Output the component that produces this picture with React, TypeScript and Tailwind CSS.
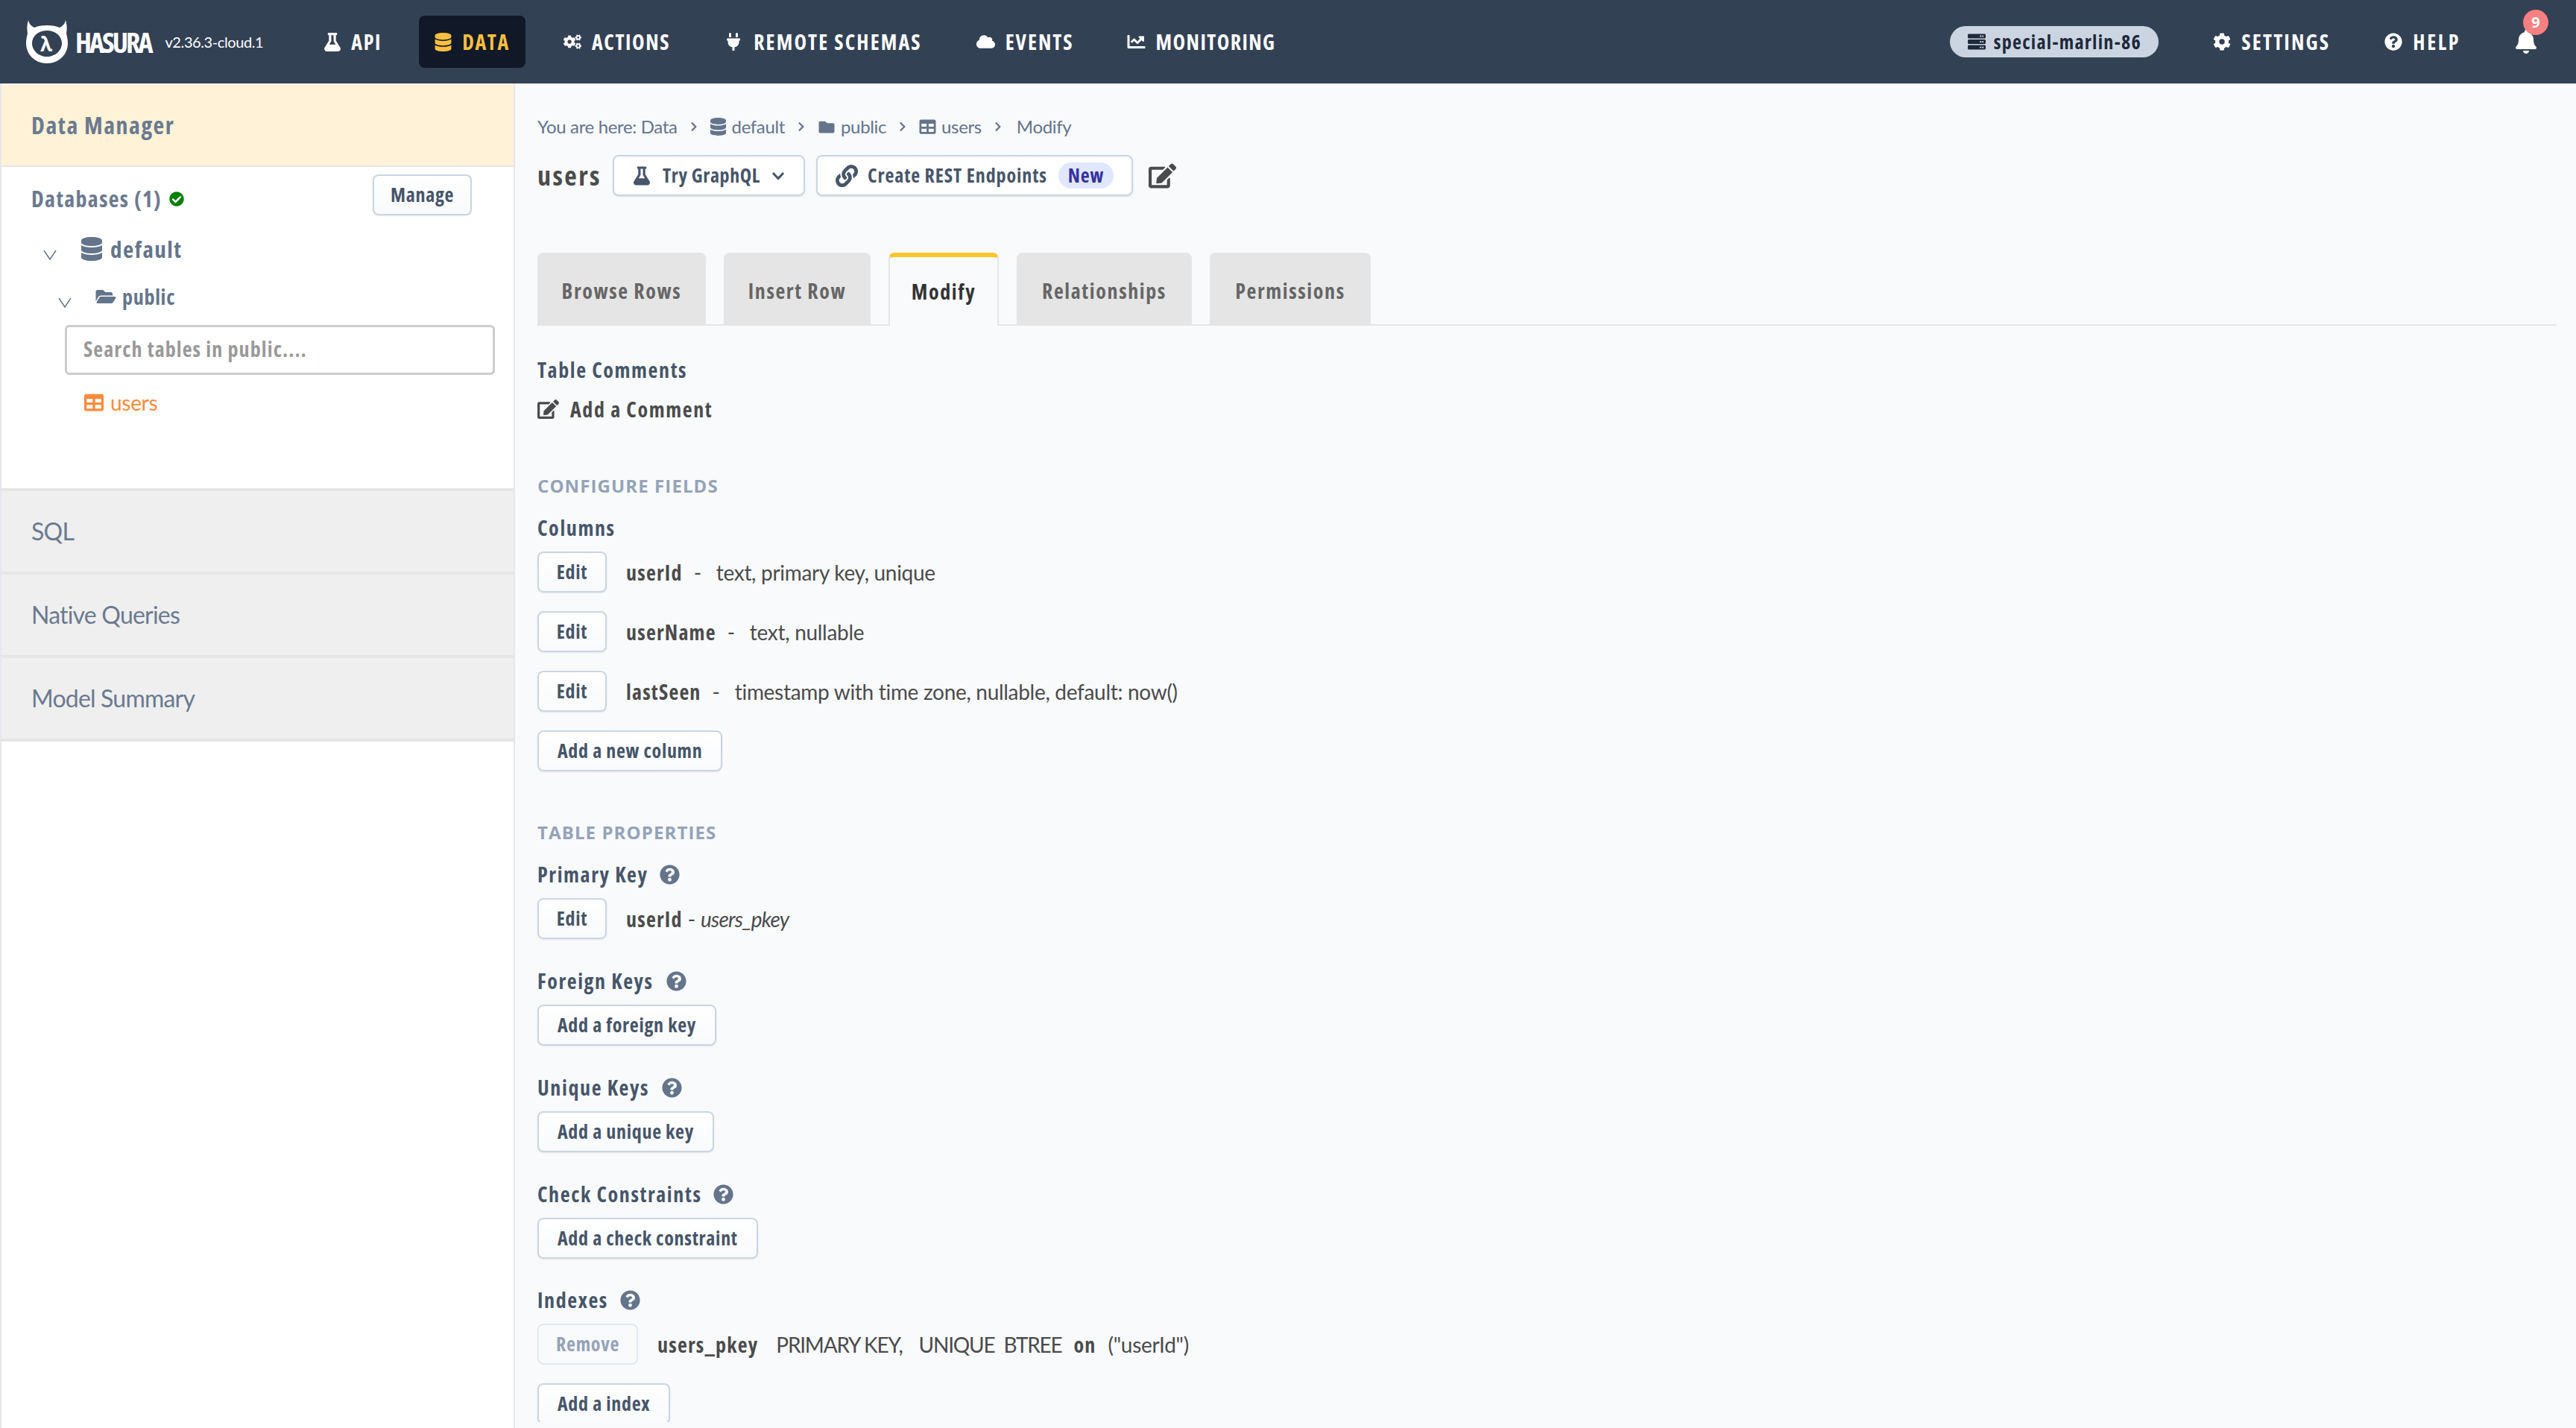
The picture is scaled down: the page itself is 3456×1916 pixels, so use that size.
import { FaFlask, FaDatabase, FaCogs, FaPlug, FaCloud, FaChartLine, FaServer, FaCog, FaQuestionCircle, FaBell, FaFolderOpen, FaFolder, FaTable, FaCheckCircle, FaLink, FaEdit, FaChevronRight } from "react-icons/fa";
import type { ReactNode } from "react";

const B = "font-['Open_Sans',sans-serif] font-bold font-stretch-[75%]";

function Logo() {
  return (
    <svg width="56" height="58" viewBox="0 0 56 58" className="shrink-0">
      <path fillRule="evenodd" fill="#fff" d="M3 0 C4 5 7 8 11 10 C15 8 21 7 28 7 C35 7 41 8 45 10 C49 8 52 5 53 0 C55 6 55 12 54 18 C55 22 56 26 56 31 C56 46 44 58 28 58 C12 58 0 46 0 31 C0 26 1 22 2 18 C1 12 1 6 3 0 Z M28 14 C17 14 8 21 8 31 C8 41 17 49 28 49 C39 49 48 41 48 31 C48 21 39 14 28 14 Z" />
    </svg>
  );
}

function Nav({ icon, label, cls = "", tr = "tracking-[1.6px]", gap = "gap-[14px]" }: { icon: ReactNode; label: string; cls?: string; tr?: string; gap?: string }) {
  return (
    <div className={`flex items-center text-[28px] text-white ${gap} ${tr} ${B} ${cls}`}>
      {icon}
      <span>{label}</span>
    </div>
  );
}

function Btn({ children, cls = "" }: { children: ReactNode; cls?: string }) {
  return (
    <button className={`h-[55px] rounded-[8px] border-2 border-[#cbd5e1] bg-linear-to-b from-white to-[#f8fafc] px-[25px] text-[26px] tracking-[0.7px] text-[#475569] shadow-[0_1px_2px_rgba(0,0,0,0.08)] ${B} ${cls}`}>
      {children}
    </button>
  );
}

function Help() {
  return <FaQuestionCircle className="h-[27px] w-[27px] text-[#64748b]" />;
}

function Heading({ children, help, cls = "" }: { children: ReactNode; help?: number; cls?: string }) {
  return (
    <div className={`flex h-[38px] items-center text-[28px] tracking-[1.6px] text-[#475569] ${B} ${cls}`}>
      <span>{children}</span>
      {help !== undefined && <span className="flex" style={{ marginLeft: help }}><Help /></span>}
    </div>
  );
}

function Section({ children, cls = "" }: { children: ReactNode; cls?: string }) {
  return <div className={`flex h-[30px] items-center font-['Open_Sans',sans-serif] text-[24px] font-bold tracking-[1.1px] text-[#94a3b8] ${cls}`}>{children}</div>;
}

function ColumnRow({ name, desc }: { name: string; desc: string }) {
  return (
    <div className="mb-[25px] flex items-center text-[28px] tracking-[-0.3px] text-[#4b4b4b]">
      <Btn cls="w-[93px] !px-0">Edit</Btn>
      <span className={`ml-[26px] tracking-[1.2px] ${B}`}>{name}</span>
      <span className="ml-[15px] mr-[20px]">-</span>
      <span>{desc}</span>
    </div>
  );
}

function Crumb() {
  return <FaChevronRight className="mx-[17px] h-[14px] w-[10px] text-[#64748b]" />;
}

function Tab({ label, active, w }: { label: string; active?: boolean; w: string }) {
  return active ? (
    <div className={`${w} relative z-10 -mb-[2px] flex h-[98px] items-center justify-center rounded-t-[8px] border-x-2 border-t-[6px] border-x-[#e5e5e5] border-t-[#fdc52b] bg-[#f8fafc] text-[28px] tracking-[1.6px] text-[#333] ${B}`}>
      {label}
    </div>
  ) : (
    <div className={`${w} flex h-[96px] items-center justify-center rounded-t-[8px] bg-[#e5e5e5] pt-[6px] text-[28px] tracking-[1.6px] text-[#666] ${B}`}>{label}</div>
  );
}

function SideItem({ label }: { label: string }) {
  return <div className="flex h-[112px] items-center border-b-4 border-[#e5e5e5] bg-[#efefef] pl-[40px] text-[32px] tracking-[-0.8px] text-[#6b7a90]">{label}</div>;
}

export default function App() {
  return (
    <div className="flex h-[1916px] w-[3456px] flex-col overflow-hidden bg-[#f8fafc] font-['Lato',sans-serif]">
      <header className="flex h-[112px] shrink-0 items-center bg-[#334155]">
        <div className="ml-[35px] flex items-center">
          <div className="relative flex">
            <Logo />
            <span className="absolute left-[19px] top-[19px] font-['Open_Sans',sans-serif] text-[26px] font-bold leading-none text-white">λ</span>
          </div>
          <span className={`ml-[10px] text-[38px] tracking-[-3px] text-white ${B}`}>HASURA</span>
          <span className="ml-[19px] text-[20px] tracking-[-0.4px] text-white">v2.36.3-cloud.1</span>
        </div>
        <Nav cls="ml-[82px]" icon={<FaFlask className="h-[25px] w-[22px]" />} label="API" />
        <div className={`ml-[50px] flex h-[70px] w-[143px] items-center justify-center gap-[14px] rounded-[8px] bg-[#111827] text-[28px] tracking-[1.6px] text-[#fbbf40] ${B}`}>
          <FaDatabase className="h-[25px] w-[23px]" />
          <span>DATA</span>
        </div>
        <Nav cls="ml-[51px]" icon={<FaCogs className="h-[24px] w-[24px]" />} label="ACTIONS" />
        <Nav cls="ml-[76px]" tr="tracking-[2.1px]" gap="gap-[18px]" icon={<FaPlug className="h-[24px] w-[18px]" />} label="REMOTE SCHEMAS" />
        <Nav cls="ml-[73px]" tr="tracking-[2px]" icon={<FaCloud className="h-[22px] w-[25px]" />} label="EVENTS" />
        <Nav cls="ml-[71px]" tr="tracking-[1.4px]" icon={<FaChartLine className="h-[24px] w-[25px]" />} label="MONITORING" />
        <div className={`ml-auto flex h-[42px] w-[280px] items-center justify-center gap-[11px] rounded-full bg-[#cbd5e1] text-[26px] tracking-[1.3px] text-[#1e293b] ${B}`}>
          <FaServer className="h-[24px] w-[24px]" />
          <span>special-marlin-86</span>
        </div>
        <Nav cls="ml-[73px]" tr="tracking-[2.2px]" icon={<FaCog className="h-[24px] w-[24px]" />} label="SETTINGS" />
        <Nav cls="ml-[73px]" tr="tracking-[2.6px]" icon={<FaQuestionCircle className="h-[24px] w-[24px]" />} label="HELP" />
        <div className="relative ml-[73px] mr-[52px]">
          <FaBell className="h-[32px] w-[30px] text-white" />
          <span className="absolute -right-[15px] -top-[27px] flex h-[34px] w-[34px] items-center justify-center rounded-full bg-[#f88080] font-['Open_Sans',sans-serif] text-[20px] font-bold text-white">9</span>
        </div>
      </header>
      <div className="flex min-h-0 flex-1">
        <aside className="w-[691px] shrink-0 border-x-2 border-[#e5e7eb] bg-white pt-[2px]">
          <div className={`flex h-[110px] items-center border-b-2 border-[#e5e5e5] bg-[#fff2d6] pl-[40px] text-[32px] tracking-[1.5px] text-[#6b7a90] ${B}`}>Data Manager</div>
          <div className="flex h-[74px] items-center pl-[40px] pr-[56px]">
            <span className={`mt-[10px] text-[30px] tracking-[1.35px] text-[#6b7a90] ${B}`}>Databases (1)</span>
            <FaCheckCircle className="ml-[10px] mt-[12px] h-[20px] w-[20px] text-[#008000]" />
            <button className={`ml-auto h-[55px] w-[133px] rounded-[8px] border-2 border-[#cbd5e1] bg-linear-to-b from-white to-[#f8fafc] text-[26px] tracking-[0.7px] text-[#475569] shadow-[0_1px_2px_rgba(0,0,0,0.08)] ${B}`}>Manage</button>
          </div>
          <div className="mt-[14px] flex h-[44px] items-center pl-[56px]">
            <svg width="18" height="14" viewBox="0 0 18 14" className="mt-[16px]"><path d="M1 1 L9 13 L17 1" fill="none" stroke="#64748b" strokeWidth="1.5" /></svg>
            <FaDatabase className="ml-[33px] h-[32px] w-[28px] text-[#64748b]" />
            <span className={`ml-[11px] text-[31px] tracking-[1.5px] text-[#64748b] ${B}`}>default</span>
          </div>
          <div className="mt-[22px] flex h-[40px] items-center pl-[76px]">
            <svg width="18" height="14" viewBox="0 0 18 14" className="mt-[16px]"><path d="M1 1 L9 13 L17 1" fill="none" stroke="#64748b" strokeWidth="1.5" /></svg>
            <FaFolderOpen className="ml-[32px] h-[24px] w-[28px] text-[#64748b]" />
            <span className={`ml-[8px] text-[28px] tracking-[0.7px] text-[#64748b] ${B}`}>public</span>
          </div>
          <div className={`ml-[85px] mt-[18px] flex h-[67px] w-[577px] items-center rounded-[6px] border-[3px] border-[#ccc] bg-white pb-[3px] pl-[22px] text-[28px] tracking-[1.1px] text-[#999] ${B}`}>Search tables in public....</div>
          <div className="mt-[23px] flex h-[28px] items-center pl-[110px] text-[28px] tracking-[-0.3px] text-[#fb8b3c]">
            <FaTable className="h-[26px] w-[28px]" />
            <span className="ml-[8px]">users</span>
          </div>
          <div className="mt-[101px] border-t-4 border-[#e5e5e5]">
            <SideItem label="SQL" />
            <SideItem label="Native Queries" />
            <SideItem label="Model Summary" />
          </div>
        </aside>
        <main className="h-[1796px] min-w-0 flex-1 overflow-hidden pl-[30px]">
          <div className="mt-[40px] flex h-[36px] items-center text-[24px] tracking-[-0.35px] text-[#64748b]">
            <span>You are here: Data</span>
            <Crumb />
            <FaDatabase className="mr-[8px] h-[24px] w-[21px]" />
            <span>default</span>
            <Crumb />
            <FaFolder className="mr-[7px] h-[21px] w-[24px]" />
            <span>public</span>
            <Crumb />
            <FaTable className="mr-[7px] h-[22px] w-[23px]" />
            <span>users</span>
            <Crumb />
            <span className="ml-[3px]">Modify</span>
          </div>
          <div className="mt-[20px] flex items-center">
            <span className={`w-[101px] text-[36px] tracking-[2.4px] text-[#4b4b4b] ${B}`}>users</span>
            <button className={`flex h-[55px] w-[258px] items-center rounded-[8px] border-2 border-[#cbd5e1] bg-white pl-[26px] text-[26px] tracking-[0.6px] text-[#475569] shadow-[0_1px_2px_rgba(0,0,0,0.1)] ${B}`}>
              <FaFlask className="h-[28px] w-[22px]" />
              <span className="ml-[17px]">Try GraphQL</span>
              <svg width="18" height="12" viewBox="0 0 18 12" className="ml-[15px]"><path d="M2 2 L9 9.5 L16 2" fill="none" stroke="#475569" strokeWidth="3" /></svg>
            </button>
            <button className={`ml-[15px] flex h-[55px] w-[425px] items-center rounded-[8px] border-2 border-[#cbd5e1] bg-white pl-[24px] text-[26px] tracking-[0.9px] text-[#475569] shadow-[0_1px_2px_rgba(0,0,0,0.1)] ${B}`}>
              <FaLink className="h-[30px] w-[30px]" />
              <span className="ml-[13px]">Create REST Endpoints</span>
              <span className="ml-[15px] flex h-[35px] w-[74px] items-center justify-center rounded-full bg-[#e0e7ff] text-[#3730a3]">New</span>
            </button>
            <FaEdit className="ml-[21px] h-[34px] w-[37px] text-[#4b4b4b]" />
          </div>
          <div className="mr-[26px] mt-[76px] flex gap-[24px] border-b-2 border-[#e5e5e5]">
            <Tab label="Browse Rows" w="w-[226px]" />
            <Tab label="Insert Row" w="w-[197px]" />
            <Tab label="Modify" active w="w-[148px]" />
            <Tab label="Relationships" w="w-[235px]" />
            <Tab label="Permissions" w="w-[216px]" />
          </div>
          <Heading cls="mt-[40px]">Table Comments</Heading>
          <div className={`mt-[15px] flex h-[38px] items-center text-[28px] tracking-[1.6px] text-[#4b4b4b] ${B}`}>
            <FaEdit className="h-[26px] w-[29px]" />
            <span className="ml-[15px]">Add a Comment</span>
          </div>
          <Section cls="mt-[69px]">CONFIGURE FIELDS</Section>
          <Heading cls="mt-[22px]">Columns</Heading>
          <div className="mt-[13px]">
            <ColumnRow name="userId" desc="text, primary key, unique" />
            <ColumnRow name="userName" desc="text, nullable" />
            <ColumnRow name="lastSeen" desc="timestamp with time zone, nullable, default: now()" />
          </div>
          <Btn>Add a new column</Btn>
          <Section cls="mt-[67px]">TABLE PROPERTIES</Section>
          <Heading help={15} cls="mt-[22px]">Primary Key</Heading>
          <div className="mt-[13px] flex items-center text-[28px] text-[#4b4b4b]">
            <Btn cls="w-[93px] !px-0">Edit</Btn>
            <span className={`ml-[26px] tracking-[1.2px] ${B}`}>userId</span>
            <span className="mx-[7px]">-</span>
            <span className="italic tracking-[-0.8px]">users_pkey</span>
          </div>
          <Heading help={17} cls="mt-[37px]">Foreign Keys</Heading>
          <Btn cls="mt-[13px]">Add a foreign key</Btn>
          <Heading help={17} cls="mt-[37px]">Unique Keys</Heading>
          <Btn cls="mt-[13px]">Add a unique key</Btn>
          <Heading help={16} cls="mt-[37px]">Check Constraints</Heading>
          <Btn cls="mt-[13px]">Add a check constraint</Btn>
          <Heading help={16} cls="mt-[36px]">Indexes</Heading>
          <div className="mt-[13px] flex items-center text-[28px] text-[#4b4b4b]">
            <button className={`h-[55px] w-[135px] rounded-[8px] border-2 border-[#e2e8f0] bg-[#f8fafc] text-[26px] tracking-[0.7px] text-[#94a3b8] ${B}`}>Remove</button>
            <span className={`ml-[26px] tracking-[1.2px] ${B}`}>users_pkey</span>
            <span className="ml-[24px] tracking-[-1.2px]">PRIMARY KEY,</span>
            <span className="ml-[22px] tracking-[-1.2px]">UNIQUE</span>
            <span className="ml-[12px] tracking-[-1.2px]">BTREE</span>
            <span className={`ml-[16px] tracking-[1.2px] ${B}`}>on</span>
            <span className="ml-[16px] tracking-[-0.3px]">("userId")</span>
          </div>
          <Btn cls="mt-[25px]">Add a index</Btn>
        </main>
      </div>
    </div>
  );
}
